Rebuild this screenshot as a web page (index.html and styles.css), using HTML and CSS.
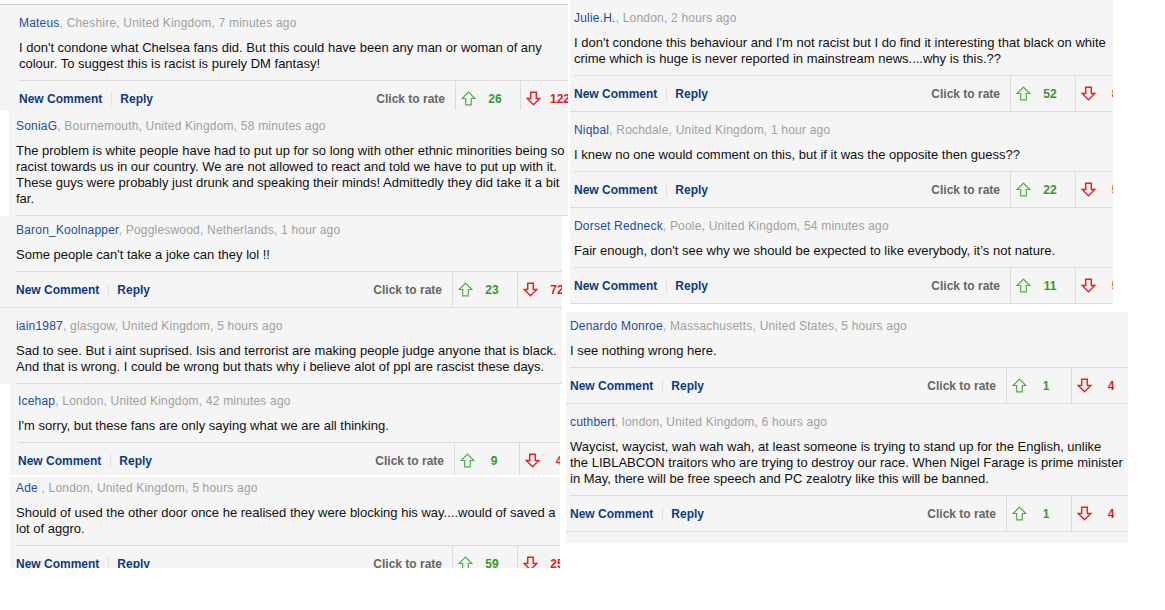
FILE: index.html
```html
<!DOCTYPE html>
<html lang="en">
<head>
    <meta charset="UTF-8">
    <title>Comments</title>
    <link rel="stylesheet" href="styles.css">
</head>
<body>
    <svg class="defs" width="0" height="0">
        <symbol id="arrow-up" viewBox="0 0 15 15">
            <path d="M7.5 1.2 L13.8 7.5 L10.3 7.5 L10.3 13.8 L4.7 13.8 L4.7 7.5 L1.2 7.5 Z" fill="none" stroke="#4fae4f" stroke-width="1.2" stroke-linejoin="miter"/>
        </symbol>
        <symbol id="arrow-down" viewBox="0 0 15 15">
            <path d="M7.5 13.8 L13.8 7.5 L10.3 7.5 L10.3 1.2 L4.7 1.2 L4.7 7.5 L1.2 7.5 Z" fill="none" stroke="#e22424" stroke-width="1.5" stroke-linejoin="miter"/>
        </symbol>
    </svg>

    <div class="collage">
        <div class="col col-left">

            <div class="crop crop-mateus">
                <div class="comment">
                    <div class="meta"><a class="name">Mateus</a>, Cheshire, United Kingdom, 7 minutes ago</div>
                    <p class="text">I don't condone what Chelsea fans did. But this could have been any man or woman of any<br>colour. To suggest this is racist is purely DM fantasy!</p>
                    <div class="actions">
                        <a href="#">New Comment</a><span class="divider"></span><a href="#">Reply</a>
                        <span class="rate-label">Click to rate</span>
                        <span class="vote up"><svg><use href="#arrow-up"/></svg><b>26</b></span>
                        <span class="vote down"><svg><use href="#arrow-down"/></svg><b>122</b></span>
                    </div>
                </div>
            </div>

            <div class="crop crop-sonia">
                <div class="comment">
                    <div class="meta"><a class="name">SoniaG</a>, Bournemouth, United Kingdom, 58 minutes ago</div>
                    <p class="text">The problem is white people have had to put up for so long with other ethnic minorities being so<br>racist towards us in our country. We are not allowed to react and told we have to put up with it.<br>These guys were probably just drunk and speaking their minds! Admittedly they did take it a bit<br>far.</p>
                    <div class="actions"></div>
                </div>
            </div>

            <div class="crop crop-baron">
                <div class="comment">
                    <div class="meta"><a class="name">Baron_Koolnapper</a>, Poggleswood, Netherlands, 1 hour ago</div>
                    <p class="text">Some people can't take a joke can they lol !!</p>
                    <div class="actions">
                        <a href="#">New Comment</a><span class="divider"></span><a href="#">Reply</a>
                        <span class="rate-label">Click to rate</span>
                        <span class="vote up"><svg><use href="#arrow-up"/></svg><b>23</b></span>
                        <span class="vote down"><svg><use href="#arrow-down"/></svg><b>72</b></span>
                    </div>
                </div>
            </div>

            <div class="crop crop-iain">
                <div class="comment">
                    <div class="meta"><a class="name">iain1987</a>, glasgow, United Kingdom, 5 hours ago</div>
                    <p class="text">Sad to see. But i aint suprised. Isis and terrorist are making people judge anyone that is black.<br>And that is wrong. I could be wrong but thats why i believe alot of ppl are rascist these days.</p>
                    <div class="actions"></div>
                </div>
            </div>

            <div class="crop crop-icehap">
                <div class="comment">
                    <div class="meta"><a class="name">Icehap</a>, London, United Kingdom, 42 minutes ago</div>
                    <p class="text">I'm sorry, but these fans are only saying what we are all thinking.</p>
                    <div class="actions">
                        <a href="#">New Comment</a><span class="divider"></span><a href="#">Reply</a>
                        <span class="rate-label">Click to rate</span>
                        <span class="vote up"><svg><use href="#arrow-up"/></svg><b>9</b></span>
                        <span class="vote down"><svg><use href="#arrow-down"/></svg><b>4</b></span>
                    </div>
                </div>
            </div>

            <div class="crop crop-ade">
                <div class="comment">
                    <div class="meta"><a class="name">Ade </a>, London, United Kingdom, 5 hours ago</div>
                    <p class="text">Should of used the other door once he realised they were blocking his way....would of saved a<br>lot of aggro.</p>
                    <div class="actions">
                        <a href="#">New Comment</a><span class="divider"></span><a href="#">Reply</a>
                        <span class="rate-label">Click to rate</span>
                        <span class="vote up"><svg><use href="#arrow-up"/></svg><b>59</b></span>
                        <span class="vote down"><svg><use href="#arrow-down"/></svg><b>25</b></span>
                    </div>
                </div>
            </div>

        </div>

        <div class="col col-right">

            <div class="crop crop-julie">
                <div class="comment">
                    <div class="meta"><a class="name">Julie.H.</a>, London, 2 hours ago</div>
                    <p class="text">I don't condone this behaviour and I'm not racist but I do find it interesting that black on white<br>crime which is huge is never reported in mainstream news....why is this.??</p>
                    <div class="actions">
                        <a href="#">New Comment</a><span class="divider"></span><a href="#">Reply</a>
                        <span class="rate-label">Click to rate</span>
                        <span class="vote up"><svg><use href="#arrow-up"/></svg><b>52</b></span>
                        <span class="vote down"><svg><use href="#arrow-down"/></svg><b>8</b></span>
                    </div>
                </div>
                <div class="comment">
                    <div class="meta"><a class="name">Niqbal</a>, Rochdale, United Kingdom, 1 hour ago</div>
                    <p class="text">I knew no one would comment on this, but if it was the opposite then guess??</p>
                    <div class="actions">
                        <a href="#">New Comment</a><span class="divider"></span><a href="#">Reply</a>
                        <span class="rate-label">Click to rate</span>
                        <span class="vote up"><svg><use href="#arrow-up"/></svg><b>22</b></span>
                        <span class="vote down"><svg><use href="#arrow-down"/></svg><b>5</b></span>
                    </div>
                </div>
                <div class="comment">
                    <div class="meta"><a class="name">Dorset Redneck</a>, Poole, United Kingdom, 54 minutes ago</div>
                    <p class="text">Fair enough, don't see why we should be expected to like everybody, it’s not nature.</p>
                    <div class="actions">
                        <a href="#">New Comment</a><span class="divider"></span><a href="#">Reply</a>
                        <span class="rate-label">Click to rate</span>
                        <span class="vote up"><svg><use href="#arrow-up"/></svg><b>11</b></span>
                        <span class="vote down"><svg><use href="#arrow-down"/></svg><b>5</b></span>
                    </div>
                </div>
            </div>

            <div class="crop crop-denardo">
                <div class="comment">
                    <div class="meta"><a class="name">Denardo Monroe</a>, Massachusetts, United States, 5 hours ago</div>
                    <p class="text">I see nothing wrong here.</p>
                    <div class="actions">
                        <a href="#">New Comment</a><span class="divider"></span><a href="#">Reply</a>
                        <span class="rate-label">Click to rate</span>
                        <span class="vote up"><svg><use href="#arrow-up"/></svg><b>1</b></span>
                        <span class="vote down"><svg><use href="#arrow-down"/></svg><b>4</b></span>
                    </div>
                </div>
                <div class="comment">
                    <div class="meta"><a class="name">cuthbert</a>, london, United Kingdom, 6 hours ago</div>
                    <p class="text">Waycist, waycist, wah wah wah, at least someone is trying to stand up for the English, unlike<br>the LIBLABCON traitors who are trying to destroy our race. When Nigel Farage is prime minister<br>in May, there will be free speech and PC zealotry like this will be banned.</p>
                    <div class="actions">
                        <a href="#">New Comment</a><span class="divider"></span><a href="#">Reply</a>
                        <span class="rate-label">Click to rate</span>
                        <span class="vote up"><svg><use href="#arrow-up"/></svg><b>1</b></span>
                        <span class="vote down"><svg><use href="#arrow-down"/></svg><b>4</b></span>
                    </div>
                </div>
            </div>

        </div>
    </div>
</body>
</html>
```

FILE: styles.css
```css
body {
    margin: 0;
    background-color: #fff;
    font-family: "Liberation Sans", Arial, sans-serif;
    font-size: 12px;
    color: #111;
}

.defs {
    display: block;
    width: 0;
    height: 0;
}

.collage {
    display: flex;
    align-items: flex-start;
}

.col {
    display: flex;
    flex-direction: column;
    align-items: flex-start;
}

.col-left {
    width: 566px;
    flex-shrink: 0;
}

/* each crop is a piece cut out of a comment page */
.crop {
    overflow: hidden;
    background-color: #f5f5f5;
    flex-shrink: 0;
}

.comment {
    width: 566px;
    padding-top: 10px;
    border-bottom: 1px solid #dcdcdc;
}

.meta {
    line-height: 16px;
    color: #a0a0a0;
    letter-spacing: 0.2px;
    white-space: nowrap;
}

.meta .name {
    color: #1d4c9c;
}

.text {
    margin: 9px 0 0;
    padding-bottom: 8px;
    font-size: 13px;
    line-height: 16px;
    white-space: nowrap;
}

.actions {
    display: flex;
    align-items: center;
    height: 35px;
    border-top: 1px solid #dcdcdc;
    font-weight: bold;
    white-space: nowrap;
}

.actions a {
    color: #0e3a80;
    text-decoration: none;
}

.divider {
    width: 1px;
    height: 14px;
    background-color: #e2e2e2;
    margin: 0 8px 0 9px;
}

.rate-label {
    margin-left: auto;
    margin-right: 10px;
    color: #666;
}

.vote {
    display: flex;
    align-items: center;
    box-sizing: border-box;
    width: 65px;
    height: 35px;
    padding-left: 5px;
    border-left: 1px solid #dcdcdc;
}

.vote svg {
    width: 15px;
    height: 15px;
}

.vote b {
    width: 24px;
    margin-left: 7px;
    text-align: center;
}

.vote.up b {
    color: #2f9c2a;
}

.vote.down b {
    color: #e01b1f;
}

/* crop pieces, left column */
.crop-mateus {
    margin-top: 4px;
    width: 568px;
    height: 105px;
    border-top: 1px solid #cfcfcf;
}

.crop-mateus .comment {
    padding-left: 19px;
}

.crop-sonia {
    margin-left: 9px;
    width: 559px;
    height: 106px;
}

.crop-sonia .comment {
    padding-left: 7px;
    margin-top: -2px;
}

.crop-baron {
    width: 562px;
    height: 92px;
}

.crop-baron .comment {
    padding-left: 16px;
    margin-top: -4px;
}

.crop-iain {
    width: 562px;
    height: 76px;
}

.crop-iain .comment {
    padding-left: 16px;
}

.crop-icehap {
    margin-left: 10px;
    width: 550px;
    height: 91px;
}

.crop-icehap .comment {
    padding-left: 8px;
    margin-top: -1px;
}

.crop-ade {
    margin: 2px 0 0 10px;
    width: 550px;
    height: 91px;
}

.crop-ade .comment {
    padding-left: 6px;
    margin-top: -7px;
}

/* crop pieces, right column */
.crop-julie {
    margin-left: 4px;
    width: 543px;
    height: 304px;
}

.crop-julie .comment {
    padding-left: 4px;
}

.crop-denardo {
    margin-top: 8px;
    width: 562px;
    height: 231px;
}

.crop-denardo .comment {
    padding-left: 4px;
}

.crop-denardo .comment:first-child {
    margin-top: -4px;
}
```
